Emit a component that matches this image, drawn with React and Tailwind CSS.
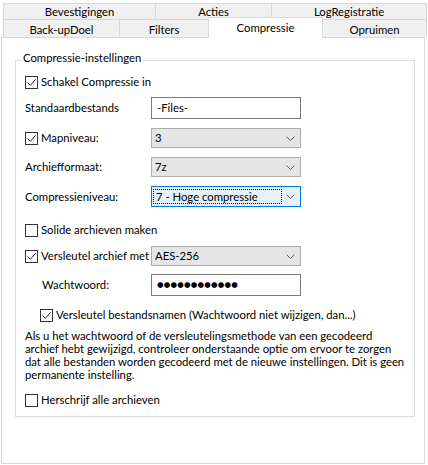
import React from "react";

const FONT = { fontFamily: "Lato, 'Liberation Sans', sans-serif" };

function Check({ checked }) {
  return (
    <span className="w-[13px] h-[13px] border border-[#333333] bg-white flex items-center justify-center shrink-0">
      {checked && (
        <svg width="11" height="11" viewBox="0 0 11 11">
          <path d="M1.5 5.5 L4.3 8.4 L9.6 2.3" stroke="#222" strokeWidth="1" fill="none" />
        </svg>
      )}
    </span>
  );
}

function Chevron() {
  return (
    <svg width="9" height="5" viewBox="0 0 9 5" className="shrink-0">
      <path d="M0.5 0.5 L4.5 4.5 L8.5 0.5" stroke="#606060" strokeWidth="1" fill="none" />
    </svg>
  );
}

function Combo({ value, focused }) {
  if (focused) {
    return (
      <div className="w-[150px] h-[21px] border border-[#0078d7] bg-[#e5f1fb] flex items-center justify-between pl-[1px] pr-[5px]">
        <div className="w-[129px] h-[15px] border border-dotted border-black flex items-center pl-[2px] leading-none">
          {value}
        </div>
        <Chevron />
      </div>
    );
  }
  return (
    <div className="w-[150px] h-[20px] border border-[#adadad] bg-[#e5e5e5] flex items-center justify-between pl-[3px] pr-[5px] leading-none">
      <span>{value}</span>
      <Chevron />
    </div>
  );
}

function TextBox({ children }) {
  return (
    <div className="w-[150px] h-[22px] border border-[#7a7a7a] bg-white flex items-center pl-[5px] leading-none">
      {children}
    </div>
  );
}

function CheckLabel({ checked, label, className = "" }) {
  return (
    <div className={`flex items-center gap-[3px] h-[14px] leading-none whitespace-nowrap ${className}`}>
      <Check checked={checked} />
      <span>{label}</span>
    </div>
  );
}

export default function App() {
  return (
    <div className="w-[428px] h-[465px] bg-white text-[11.3px] text-black overflow-hidden pl-[1px]" style={FONT}>
      {/* Tab strip */}
      <div className="ml-[2px] pt-[3px] w-[424px]">
        <div className="flex h-[16px] leading-none">
          <div className="w-[152px] border-t border-l border-[#d9d9d9] bg-[#f0f0f0] flex items-center justify-center">
            Bevestigingen
          </div>
          <div className="w-[116px] border-t border-l border-[#d9d9d9] bg-[#f0f0f0] flex items-center justify-center">
            Acties
          </div>
          <div className="w-[156px] border-t border-l border-r border-[#d9d9d9] bg-[#f0f0f0] flex items-center justify-center">
            LogRegistratie
          </div>
        </div>
        <div className="flex h-[18px] leading-none">
          <div className="w-[116px] border-t border-l border-[#d9d9d9] bg-[#f0f0f0] flex items-center justify-center pt-[2px]">
            Back-upDoel
          </div>
          <div className="w-[89px] border-t border-l border-[#d9d9d9] bg-[#f0f0f0] flex items-center justify-center pt-[2px]">
            Filters
          </div>
          <div className="relative z-10 -mt-[2px] h-[21px] w-[115px] border-t border-l border-r border-[#d9d9d9] bg-white flex items-center justify-center pb-[1px]">
            Compressie
          </div>
          <div className="w-[104px] border-t border-r border-[#d9d9d9] bg-[#f0f0f0] flex items-center justify-center pt-[2px]">
            Opruimen
          </div>
        </div>
      </div>

      {/* Tab page */}
      <div className="w-[424px] h-[427px] border border-[#d9d9d9] bg-white pt-[22px] pl-[13px]">
        <div className="w-[400px] h-[357px] border border-[#dcdcdc]">
          <div className="-mt-[10px] ml-[5px] px-[2px] bg-white w-fit h-[14px] leading-[14px]">
            Compressie-instellingen
          </div>

          <div className="pl-[9px] flex flex-col">
            <CheckLabel checked label="Schakel Compressie in" className="mt-[10px]" />

            <div className="flex items-center h-[22px] mt-[8px]">
              <span className="w-[126px] leading-none">Standaardbestands</span>
              <TextBox>-Files-</TextBox>
            </div>

            <div className="flex items-center h-[20px] mt-[9px]">
              <div className="w-[126px]">
                <CheckLabel checked label="Mapniveau:" />
              </div>
              <Combo value="3" />
            </div>

            <div className="flex items-center h-[20px] mt-[9px]">
              <span className="w-[126px] leading-none">Archiefformaat:</span>
              <Combo value="7z" />
            </div>

            <div className="flex items-center h-[21px] mt-[9px]">
              <span className="w-[126px] leading-none">Compressieniveau:</span>
              <Combo value="7 - Hoge compressie" focused />
            </div>

            <CheckLabel label="Solide archieven maken" className="mt-[16px]" />

            <div className="flex items-center h-[20px] mt-[9px]">
              <div className="w-[126px]">
                <CheckLabel checked label="Versleutel archief met" />
              </div>
              <Combo value="AES-256" />
            </div>

            <div className="flex items-center h-[22px] mt-[8px]">
              <span className="w-[126px] pl-[17px] leading-none">Wachtwoord:</span>
              <TextBox>
                <span className="tracking-[0.2px] text-[7.5px]" style={{ fontFamily: "'DejaVu Sans', sans-serif" }}>
                  ●●●●●●●●●●●●
                </span>
              </TextBox>
            </div>

            <CheckLabel
              checked
              label="Versleutel bestandsnamen (Wachtwoord niet wijzigen, dan...)"
              className="mt-[12px] pl-[15px]"
            />

            <p className="mt-[7px] leading-[13px] whitespace-nowrap">
              Als u het wachtwoord of de versleutelingsmethode van een gecodeerd
              <br />
              archief hebt gewijzigd, controleer onderstaande optie om ervoor te zorgen
              <br />
              dat alle bestanden worden gecodeerd met de nieuwe instellingen. Dit is geen
              <br />
              permanente instelling.
            </p>

            <CheckLabel label="Herschrijf alle archieven" className="mt-[12px]" />
          </div>
        </div>
      </div>
    </div>
  );
}
